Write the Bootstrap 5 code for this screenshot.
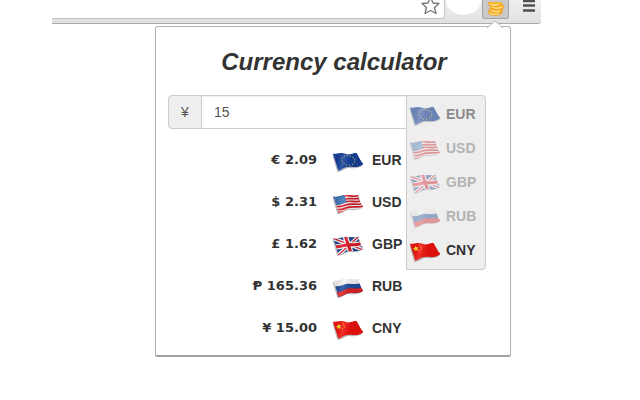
<!DOCTYPE html>
<html lang="en">
<head>
<meta charset="utf-8">
<meta name="viewport" content="width=device-width, initial-scale=1">
<title>Currency calculator</title>
<link href="https://cdn.jsdelivr.net/npm/bootstrap@5.3.0/dist/css/bootstrap.min.css" rel="stylesheet">
<style>
body { font-family: "Liberation Sans", Arial, sans-serif; font-size: 14px; line-height: 20px; color: #333; background: #fff; }
.browser-bar { height: 24px; margin: 0 99px 0 52px; padding-right: 5px; background: linear-gradient(#f0f0f0, #e0e0e0); border-bottom: 1px solid #aaa; border-bottom-right-radius: 3px; }
.address { height: 19px; background: #fff; border: 1px solid #c4c4c4; border-top: 0; border-bottom-right-radius: 3px; border-left: 0; padding-right: 4px; margin-right: 1px; }
.round-button { width: 35px; height: 30px; margin-top: -15px; margin-right: 1px; border-radius: 50%; background: #fff; }
.tool-button { width: 27px; height: 19px; border: 1px solid #a4a4a4; border-top: 0; border-radius: 0 0 3px 3px; background: #c9c9c9; padding: 0; line-height: 0; }
.menu-button { width: 14px; height: 19px; border: 0; padding: 0; background: none; line-height: 0; margin-left: 13px; }
.popup { margin: 2px 129px 0 155px; border: 1px solid #b4b4b4; border-bottom: 2px solid #a2a2a2; border-radius: 3px; padding: 21px 24px 6px 12px; background: #fff; box-shadow: 0 1px 1px #ddd; }
.pointer { left: 331px; top: -7px; }
.title { font-size: 24px; line-height: 28px; font-weight: 700; font-style: italic; margin: 0 -14px 19px 0; }
.amount-row { height: 34px; }
.amount-row .input-group-text { width: 34px; padding: 0; justify-content: center; background: #eee; border-color: #ccc; color: #555; font-size: 14px; border-radius: 4px 0 0 4px; }
.amount-row .form-control { padding: 6px 12px; font-size: 14px; line-height: 20px; color: #555; border-color: #ccc; box-shadow: inset 0 1px 1px rgba(0,0,0,.07); }
.picker-slot { width: 80px; }
.picker { top: 0; left: 0; width: 80px; background: #eee; border: 1px solid #ccc; border-radius: 0 4px 4px 0; padding: 1px 0 2px; z-index: 5; }
.choice { height: 34px; border: 0; background: none; padding: 0 0 0 1px; gap: 4px; color: #b3b3b3; font-weight: 700; }
.choice .flag { opacity: .42; }
.choice.hovered { color: #8c8c8c; }
.choice.hovered .flag { opacity: .6; }
.choice.chosen { color: #333; }
.choice.chosen .flag { opacity: 1; }
.results { margin-top: 10px; }
.results td, .results th { height: 42px; padding: 0; vertical-align: middle; font-weight: 700; }
.results .value { width: 149px; font-family: "DejaVu Sans", sans-serif; font-size: 13px; text-align: right; }
.results .flag-cell { width: 55px; padding-left: 14px; }
.flag { width: 34px; height: 26px; display: block; }
</style>
<script src="https://cdn.jsdelivr.net/npm/bootstrap@5.3.0/dist/js/bootstrap.bundle.min.js"></script>
</head>
<body>
<svg width="0" height="0" class="position-absolute" aria-hidden="true">
  <defs>
    <clipPath id="cloth"><path d="M5 20C14 22 23 17 32 18C41 19 47 23 56 22C63 21 69 17 76 17C83 28 88 41 97 51C87 59 76 61 66 60C56 59 48 59 40 62C33 65 28 70 22 71C17 55 12 36 5 20Z"/></clipPath>
    <clipPath id="wave"><path d="M6 22C17 25 28 20 38 18C52 16 67 21 82 17C86 31 89 43 97 54C86 61 72 61 61 60C45 58 35 71 22 72C18 55 13 38 6 22Z"/></clipPath>
    <linearGradient id="fold" x1="0" y1="0" x2="1" y2="0.2"><stop offset="0" stop-color="#fff" stop-opacity=".1"/><stop offset=".25" stop-color="#000" stop-opacity=".1"/><stop offset=".45" stop-color="#fff" stop-opacity=".12"/><stop offset=".65" stop-color="#000" stop-opacity=".08"/><stop offset="1" stop-color="#000" stop-opacity=".1"/></linearGradient>
    <filter id="soft" x="-20%" y="-20%" width="140%" height="140%"><feGaussianBlur stdDeviation="2"/></filter>
    <path id="shade" filter="url(#soft)" fill="#777" opacity=".5" d="M5 28L19 75C35 74 43 61 56 63C72 65 87 63 96 54L80 28Z"/>
    <symbol id="eur" viewBox="0 0 102 78"><use href="#shade"/><g clip-path="url(#cloth)"><path fill="#15409b" d="M0 0H102V78H0z"/><ellipse cx="52" cy="40" rx="20" ry="14" transform="rotate(12 52 40)" fill="none" stroke="#c9c662" stroke-width="3.500" stroke-dasharray="3 6"/><path fill="url(#fold)" d="M0 0H102V78H0z"/></g></symbol>
    <symbol id="usd" viewBox="0 0 102 78"><use href="#shade"/><g clip-path="url(#wave)"><path fill="#f7f4f4" d="M0 0H102V78H0z"/><g fill="none" stroke="#d61e2c" stroke-width="5"><path d="M6 25C17 28 28 23 38 21C52 18 67 24 82 20"/><path d="M8 34C20 38 31 32 41 30C55 26 70 32 85 28"/><path d="M11 43C23 47 34 41 44 38C58 34 73 41 88 36"/><path d="M14 52C26 56 37 50 47 47C61 42 76 49 91 44"/><path d="M17 61C29 65 40 59 50 55C64 51 79 57 97 51"/><path d="M20 70C32 72 41 67 50 63"/></g><path fill="#3774b5" d="M4 20C18 26 27 20 39 16L47 40C35 43 27 50 13 48z"/><path fill="none" stroke="#9dc1e1" stroke-width="2" stroke-dasharray="2 4" d="M11 31L36 25M14 37L39 31M16 43L41 37"/><path fill="url(#fold)" d="M0 0H102V78H0z"/></g></symbol>
    <symbol id="gbp" viewBox="0 0 102 78"><use href="#shade"/><g clip-path="url(#wave)"><path fill="#21438e" d="M0 0H102V78H0z"/><path fill="none" stroke="#fff" stroke-width="11" d="M4 21L97 57M20 74L84 16"/><path fill="none" stroke="#d9202e" stroke-width="4" d="M4 21L97 57M20 74L84 16"/><path fill="none" stroke="#fff" stroke-width="16" d="M42 13Q50 37 60 65M12 47C27 50 38 41 53 41C67 42 78 43 92 37"/><path fill="none" stroke="#df1928" stroke-width="9" d="M42 13Q50 37 60 65M12 47C27 50 38 41 53 41C67 42 78 43 92 37"/><path fill="url(#fold)" d="M0 0H102V78H0z"/></g></symbol>
    <symbol id="rub" viewBox="0 0 102 78"><use href="#shade"/><g clip-path="url(#wave)"><path fill="#f6f6f6" d="M0 0H102V78H0z"/><path fill="#234d9f" d="M10 39C24 42 34 36 44 33C56 30 73 36 90 31V78H0z"/><path fill="#db2427" d="M14 56C28 59 38 51 48 47C62 43 79 50 96 43V78H0z"/><path fill="url(#fold)" d="M0 0H102V78H0z"/></g></symbol>
    <symbol id="cny" viewBox="0 0 102 78"><use href="#shade"/><g clip-path="url(#cloth)"><path fill="#f0120c" d="M0 0H102V78H0z"/><path fill="#ffd92b" d="M22 26L25 31L31 30L28 35L31 41L24 39L20 43L19 37L14 34L20 32zM33 22l3 1 1 3-3-1zM37 28l3 1 0 3-3-1zM38 35l3 0 0 3-3-1zM33 41l3-1 1 3-3 0z"/><path fill="url(#fold)" d="M0 0H102V78H0z"/></g></symbol>
  </defs>
</svg>

<header class="browser-bar d-flex align-items-start">
  <div class="address flex-grow-1 d-flex justify-content-end">
    <svg width="19" height="16" viewBox="0 0 19 16" aria-label="Bookmark"><path d="M9.500-3L12 3L18 3.500L13.500 7.500L15 13.500L9.500 10.500L4 13.500L5.500 7.500L1 3.500L7 3Z" fill="#fff" stroke="#777" stroke-width="1.300" stroke-linejoin="round"/></svg>
  </div>
  <div class="round-button"></div>
  <button class="tool-button" type="button" aria-label="Currency calculator"><svg width="20" height="15" viewBox="0 0 20 15"><g fill="#fbb632" stroke="#e8962a" stroke-width=".7"><ellipse cx="9" cy="10.500" rx="7" ry="3"/><ellipse cx="10" cy="8" rx="7" ry="3"/><ellipse cx="11" cy="4.500" rx="7" ry="3"/><ellipse cx="9" cy="1.500" rx="7" ry="3"/></g><path d="M3 11Q8 13.500 13 11.500M5 8.500Q9 10.500 14 9M6 5Q11 7.500 16 5M4 2Q8 4.500 13 2" fill="none" stroke="#ffe38a" stroke-width="1.300"/></svg></button>
  <button class="menu-button" type="button" aria-label="Menu"><svg width="14" height="19" viewBox="0 0 14 19"><path d="M1 1H13M1 5.500H13M1 10.500H13" stroke="#505050" stroke-width="2.600"/></svg></button>
</header>

<main class="popup position-relative">
  <svg class="pointer position-absolute" width="16" height="8" viewBox="0 0 16 8" aria-hidden="true"><path d="M0 8L8 1L16 8" fill="#fff" stroke="#b4b4b4"/></svg>
  <h1 class="title text-center">Currency calculator</h1>
  <form class="amount-row d-flex">
    <div class="input-group flex-nowrap">
      <label class="input-group-text" for="amount">¥</label>
      <input class="form-control rounded-0 border-end-0" id="amount" type="text" value="15">
    </div>
    <div class="picker-slot position-relative flex-shrink-0">
      <div class="picker position-absolute d-flex flex-column">
        <button type="button" class="choice hovered d-flex align-items-center"><svg class="flag"><use href="#eur"/></svg>EUR</button>
        <button type="button" class="choice d-flex align-items-center"><svg class="flag"><use href="#usd"/></svg>USD</button>
        <button type="button" class="choice d-flex align-items-center"><svg class="flag"><use href="#gbp"/></svg>GBP</button>
        <button type="button" class="choice d-flex align-items-center"><svg class="flag"><use href="#rub"/></svg>RUB</button>
        <button type="button" class="choice chosen d-flex align-items-center"><svg class="flag"><use href="#cny"/></svg>CNY</button>
      </div>
    </div>
  </form>
  <table class="results w-100">
    <tbody>
      <tr><td class="value">€ 2.09</td><td class="flag-cell"><svg class="flag"><use href="#eur"/></svg></td><th scope="row">EUR</th></tr>
      <tr><td class="value">$ 2.31</td><td class="flag-cell"><svg class="flag"><use href="#usd"/></svg></td><th scope="row">USD</th></tr>
      <tr><td class="value">£ 1.62</td><td class="flag-cell"><svg class="flag"><use href="#gbp"/></svg></td><th scope="row">GBP</th></tr>
      <tr><td class="value">Ᵽ 165.36</td><td class="flag-cell"><svg class="flag"><use href="#rub"/></svg></td><th scope="row">RUB</th></tr>
      <tr><td class="value">¥ 15.00</td><td class="flag-cell"><svg class="flag"><use href="#cny"/></svg></td><th scope="row">CNY</th></tr>
    </tbody>
  </table>
</main>
</body>
</html>
